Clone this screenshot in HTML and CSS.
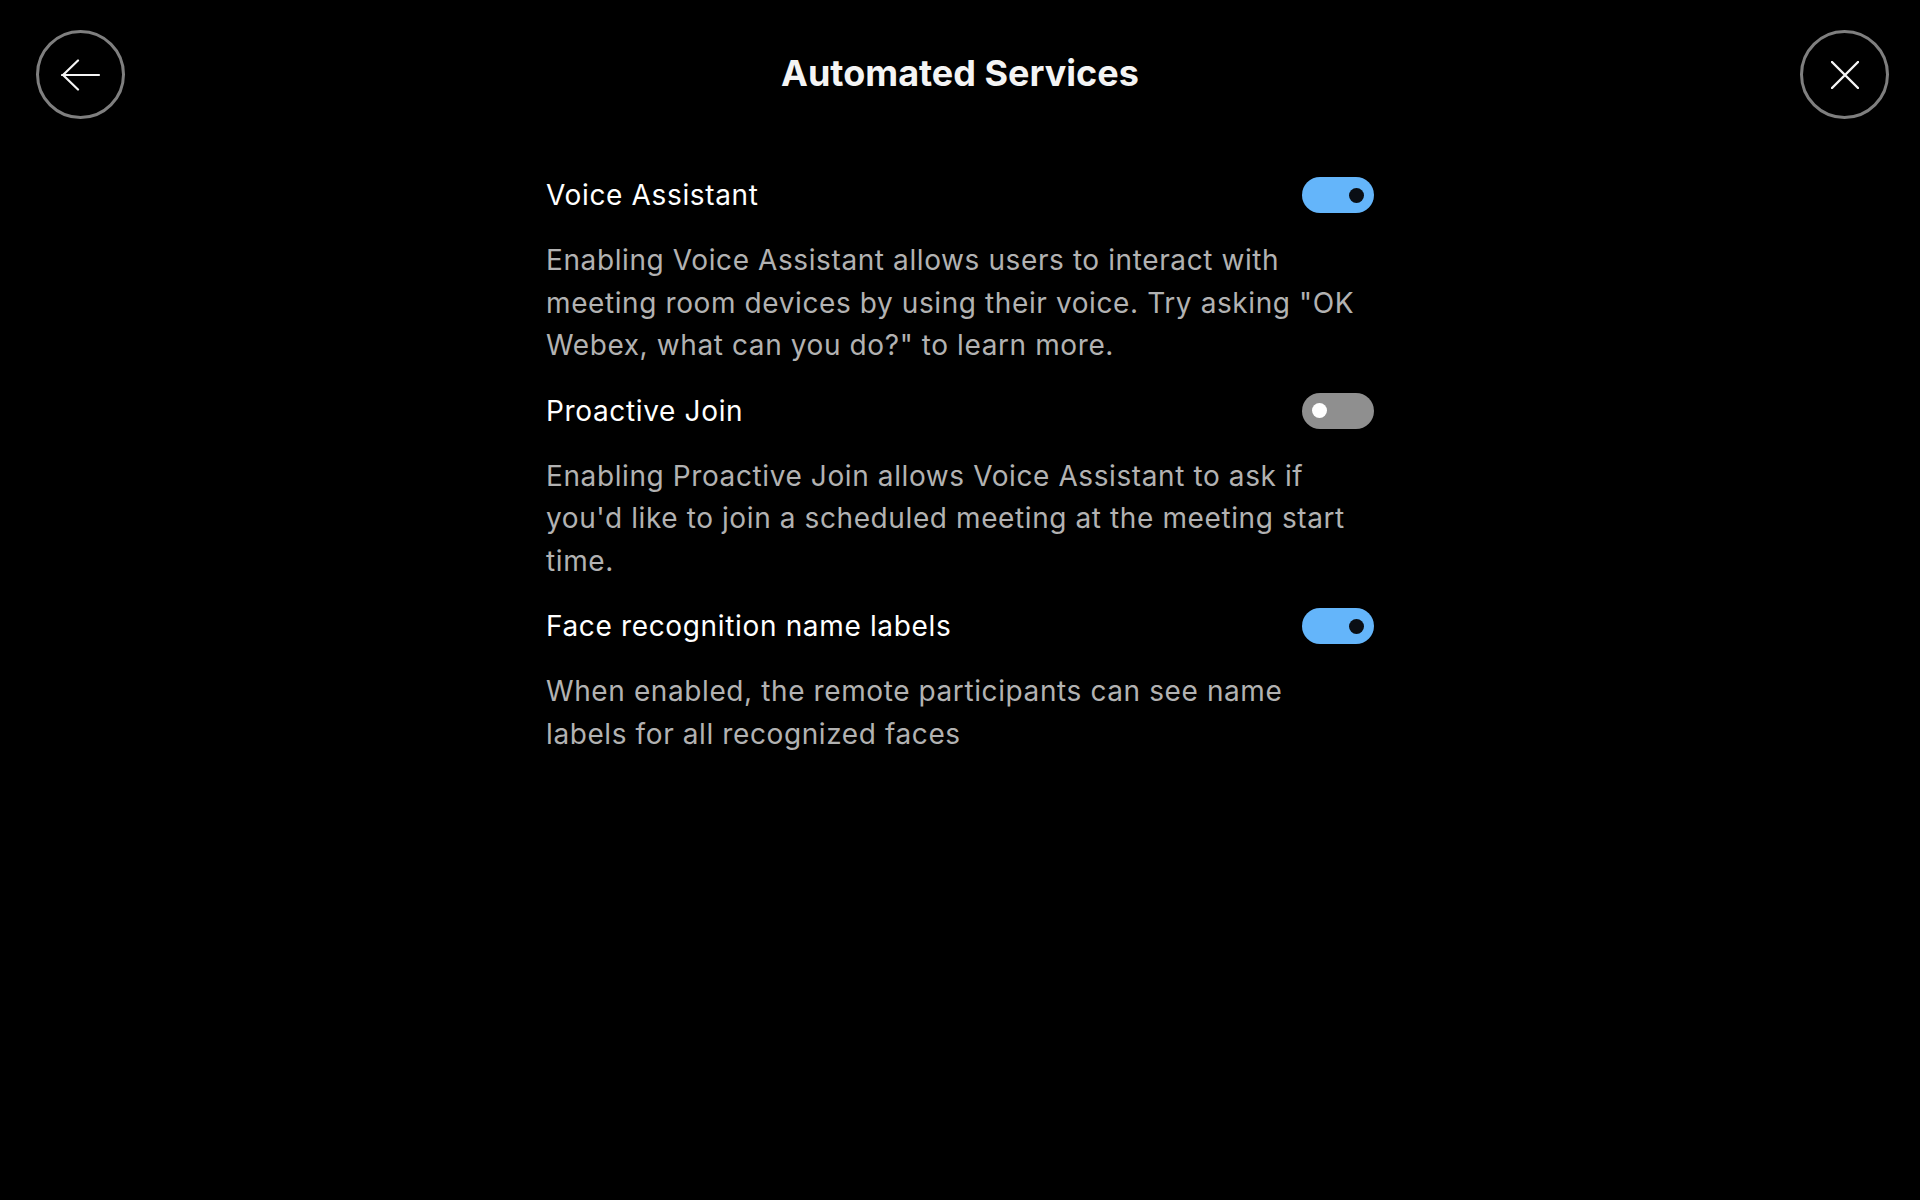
FILE: index.html
```html
<!DOCTYPE html>
<html>
<head>
<meta charset="utf-8">
<link rel="stylesheet" href="styles.css">
</head>
<body>
<div class="page">
  <header class="header">
    <button class="circle-btn back" aria-label="Back">
      <svg width="40" height="32" viewBox="0 0 40 32"><path d="M1 16 H38 M17 1.5 L2 16 L17 30.5" fill="none" stroke="#f5f5f5" stroke-width="2.2" stroke-linecap="round" stroke-linejoin="round"/></svg>
    </button>
    <h1 class="title">Automated Services</h1>
    <button class="circle-btn close" aria-label="Close">
      <svg width="28" height="28" viewBox="0 0 28 28"><path d="M1 1 L27 27 M27 1 L1 27" fill="none" stroke="#f5f5f5" stroke-width="2.4" stroke-linecap="round"/></svg>
    </button>
  </header>
  <main class="content">
    <section class="setting">
      <div class="setting-row">
        <span class="label">Voice Assistant</span>
        <span class="toggle on"><span class="knob"></span></span>
      </div>
      <p class="desc">Enabling Voice Assistant allows users to interact with meeting room devices by using their voice. Try asking "OK Webex, what can you do?" to learn more.</p>
    </section>
    <section class="setting">
      <div class="setting-row">
        <span class="label">Proactive Join</span>
        <span class="toggle off"><span class="knob"></span></span>
      </div>
      <p class="desc">Enabling Proactive Join allows Voice Assistant to ask if you'd like to join a scheduled meeting at the meeting start time.</p>
    </section>
    <section class="setting">
      <div class="setting-row">
        <span class="label">Face recognition name labels</span>
        <span class="toggle on"><span class="knob"></span></span>
      </div>
      <p class="desc">When enabled, the remote participants can see name labels for all recognized faces</p>
    </section>
  </main>
</div>
</body>
</html>
```

FILE: styles.css
```css
* { box-sizing: border-box; }
html, body {
  margin: 0;
  padding: 0;
  background: #000;
  width: 1920px;
  height: 1200px;
  overflow: hidden;
}
body {
  font-family: Inter, "Noto Sans", sans-serif;
  color: #fff;
}
.page {
  width: 1920px;
  height: 1200px;
}
.header {
  display: grid;
  grid-template-columns: 1fr auto 1fr;
  align-items: center;
  padding: 30px 31px 0 31px;
}
.circle-btn {
  width: 89px;
  height: 89px;
  border-radius: 50%;
  border: 3px solid #7f7f7f;
  background: transparent;
  display: flex;
  align-items: center;
  justify-content: center;
  padding: 0;
}
.circle-btn.close { justify-self: end; }
.circle-btn.back { justify-self: start; margin-left: 5px; }
.title {
  margin: 0 0 4px;
  font-size: 36px;
  font-weight: 700;
  color: #f4f4f4;
}
.content {
  width: 828px;
  margin: 58px auto 0;
}
.setting-row {
  display: flex;
  align-items: center;
  justify-content: space-between;
  height: 36px;
}
.label {
  font-size: 28px;
  letter-spacing: 0.65px;
  color: #fff;
}
.desc {
  max-width: 818px;
  margin: 26px 0 26px;
  font-size: 28px;
  letter-spacing: 0.6px;
  line-height: 42.5px;
  color: #b2b2b2;
}
.toggle {
  width: 72px;
  height: 36px;
  border-radius: 18px;
  display: flex;
  align-items: center;
  padding: 0 10px;
}
.toggle.on {
  background: #64b5fa;
  justify-content: flex-end;
}
.toggle.off {
  background: #8f8f8f;
  justify-content: flex-start;
}
.knob {
  width: 15px;
  height: 15px;
  border-radius: 50%;
}
.toggle.on .knob { background: #0a0e14; }
.toggle.off .knob { background: #fff; }
```
